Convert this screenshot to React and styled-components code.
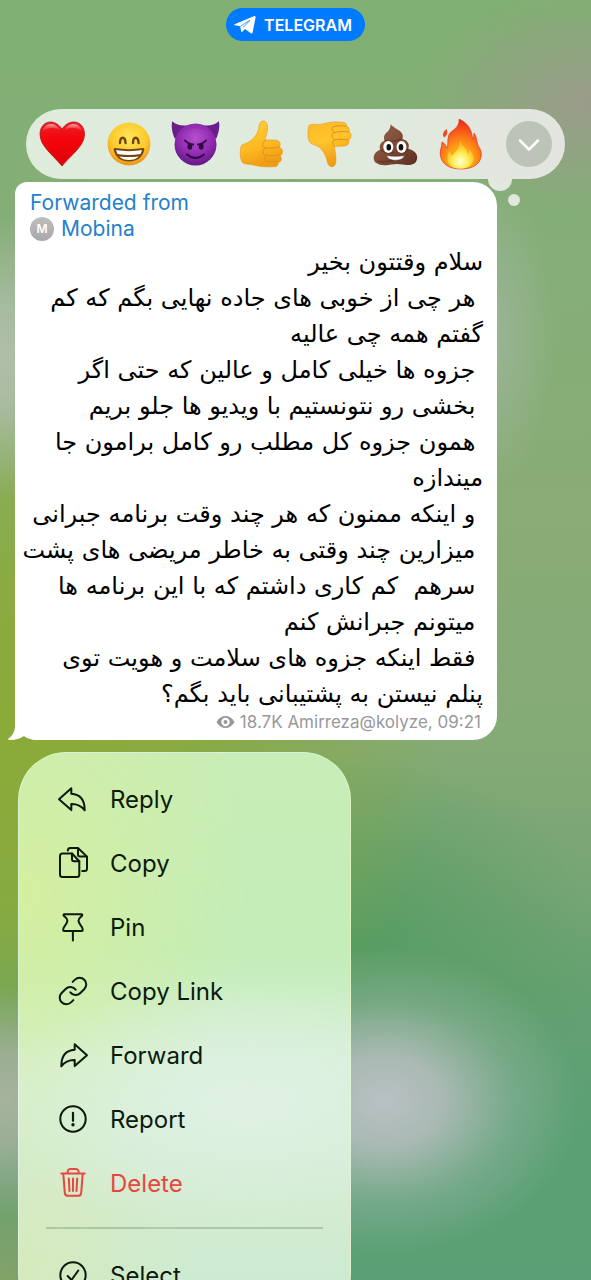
import React from 'react';
import styled, { createGlobalStyle } from 'styled-components';
import { Link as LinkIcon } from 'lucide-react';

const messageText = [
  'سلام وقتتون بخیر',
  ' هر چی از خوبی های جاده نهایی بگم که کم',
  'گفتم همه چی عالیه',
  ' جزوه ها خیلی کامل و عالین که حتی اگر',
  ' بخشی رو نتونستیم با ویدیو ها جلو بریم',
  ' همون جزوه کل مطلب رو کامل برامون جا',
  'میندازه',
  ' و اینکه ممنون که هر چند وقت برنامه جبرانی',
  ' میزارین چند وقتی به خاطر مریضی های پشت',
  ' سرهم  کم کاری داشتم که با این برنامه ها',
  ' میتونم جبرانش کنم',
  ' فقط اینکه جزوه های سلامت و هویت توی',
  'پنلم نیستن به پشتیبانی باید بگم؟',
].join('\n');

const Heart = () => (
  <EmojiSvg viewBox="0 0 48 48">
    <defs>
      <linearGradient id="heart" x1="0" y1="0" x2="0" y2="1">
        <stop offset="0" stopColor="#e8202a" />
        <stop offset="0.4" stopColor="#f5050b" />
        <stop offset="1" stopColor="#dc0209" />
      </linearGradient>
      <linearGradient id="heartShine" x1="0" y1="0" x2="0" y2="1">
        <stop offset="0" stopColor="#ffb4b4" stopOpacity="0.9" />
        <stop offset="1" stopColor="#ff5050" stopOpacity="0" />
      </linearGradient>
    </defs>
    <path
      d="M24 9C20 3.500 16 2 12.500 2 6.500 2 2 7 2 14c0 12 12 20 22 32 10-12 22.500-20 22.500-32 0-7-4.500-12-10.500-12C32 2 28 3.500 24 9z"
      fill="url(#heart)"
      stroke="#b81a1d"
      strokeWidth="0.8"
    />
    <path d="M4 12c1-5 5-8 9-8 4 0 7 2.500 9 6-4-3-14-3-18 2z" fill="url(#heartShine)" />
    <path d="M26.500 10c2-3.500 5-6 9-6s8 3 9 8c-4-5-14-5-18-2z" fill="url(#heartShine)" />
  </EmojiSvg>
);

const Grin = () => (
  <EmojiSvg viewBox="0 0 48 48">
    <defs>
      <radialGradient id="grin" cx="0.5" cy="0.35" r="0.65">
        <stop offset="0" stopColor="#ffe65a" />
        <stop offset="0.65" stopColor="#fdc92b" />
        <stop offset="1" stopColor="#ee9219" />
      </radialGradient>
    </defs>
    <circle cx="24" cy="24" r="21.400" fill="url(#grin)" />
    <g fill="none" stroke="#70420d" strokeWidth="2.400" strokeLinecap="round">
      <path d="M15 23c.3-7 5-7 5.600 0M28 23c.3-7 5-7 5.600 0" />
    </g>
    <path d="M10 28c9 1.500 19 1.500 28 0 1.500 0 1.500 1.500 1 3-2 7-8 10.500-15 10.500S11 38 9 31c-.5-1.500-.5-3 1-3z" fill="#744612" />
    <path d="M11 30c8 1.500 18 1.500 26 0l-1.500 4c-8 1.300-15 1.300-23 0zM14 36.500c7 .8 13 .8 20 0-5 4.800-15 4.800-20 0z" fill="#fff" />
  </EmojiSvg>
);

const Devil = () => (
  <EmojiSvg viewBox="0 0 48 48">
    <defs>
      <radialGradient id="devil" cx="0.5" cy="0.35" r="0.65">
        <stop offset="0" stopColor="#b84fd0" />
        <stop offset="0.6" stopColor="#902bb0" />
        <stop offset="1" stopColor="#641986" />
      </radialGradient>
    </defs>
    <path d="M1.300 1.300C5 5 10 6 16 5.500L4 19C1 13 0 6 1.300 1.300zM47.800 1.300C44 5 39 6 33 5.500L45 19c3-6 4-13 2.800-17.700z" fill="#6a1f88" />
    <circle cx="24.500" cy="24.500" r="21" fill="url(#devil)" />
    <path d="M9 13c5-7 9-9 15.500-9S35 6 40 13c-9-6-22-6-31 0z" fill="#8a2ba8" opacity="0.5" />
    <g fill="none" stroke="#310946" strokeLinecap="round">
      <path d="M14 20.500c2 2.500 4.500 3.500 8 4M35 20.500c-2 2.500-4.500 3.500-8 4" strokeWidth="2" />
      <path d="M16 34.500c5 4.500 12 4.500 17 0" strokeWidth="2" />
    </g>
    <ellipse cx="18.800" cy="26.500" rx="2.400" ry="3.200" fill="#310946" />
    <ellipse cx="30.200" cy="26.500" rx="2.400" ry="3.200" fill="#310946" />
  </EmojiSvg>
);

const ThumbUp = () => (
  <EmojiSvg viewBox="0 0 48 48">
    <defs>
      <linearGradient id="thumbUp" x1="0" y1="0" x2="0.3" y2="1">
        <stop offset="0" stopColor="#ffcf38" />
        <stop offset="0.6" stopColor="#fdbb22" />
        <stop offset="1" stopColor="#f09d15" />
      </linearGradient>
    </defs>
    <path
      d="M4 25c3-1.500 6-2 9-4.500 4-3.500 6.500-7 7.500-11 .6-3.500 1-8 4-8.500 3.500-.5 5.500 3 5 8-.3 4-1.500 7-2.500 11h6c4 0 8 0 9 3 .7 2-.2 3.500-1 4 2.500 1 4 3 3.500 5.500-.3 2-1.500 3-2.500 3.300 1.500 1.500 1.800 3 1 4.700-.7 1.500-2 2-3 2.300.8 3-1.500 4-5 4-7 .3-13 0-18-1.500-4-1.200-8-.5-12-2.300C1.500 40 1.500 28 4 25z"
      fill="url(#thumbUp)"
      stroke="#e8951c"
      strokeWidth="0.6"
    />
    <g fill="none" stroke="#e0901a" strokeWidth="1" strokeLinecap="round">
      <path d="M27 20.500c-3 2-3.500 6-.5 7.300 5 .8 10 .5 15-.8M27 28c-3 2-3 6 .5 7.300 5 .8 9 .5 14.500-.8M28 35.500c-2 2-2 5 .5 6 4 .8 7.500.3 11-.5" />
    </g>
  </EmojiSvg>
);

const ThumbDown = () => (
  <EmojiSvg viewBox="0 0 48 48">
    <defs>
      <linearGradient id="thumbDown" x1="0" y1="0" x2="0.3" y2="1">
        <stop offset="0" stopColor="#fdba27" />
        <stop offset="0.5" stopColor="#ffc42b" />
        <stop offset="1" stopColor="#f09d15" />
      </linearGradient>
    </defs>
    <path
      d="M4.500 5C10 3 13 5.500 18 4c6-2 13-2.500 19-1.800 4 .3 5 2 4.500 4 2 .5 3.500 2.500 2.500 5.500 1.500 1 2.500 3 2 5-.4 1.800-1.500 2.700-2.500 3 .8 2 .5 4-1 5.200-2 1.500-9 1.500-13 1.300 0 4 1.500 8 1.500 13 0 4-1 7.500-4 7.500-4 0-4.500-4-5.500-8-1-3.500-3-7-6-10.500-3-3-7-3-10-5.200C2 20 2.500 8 4.500 5z"
      fill="url(#thumbDown)"
      stroke="#e8951c"
      strokeWidth="0.6"
    />
    <g fill="none" stroke="#e0901a" strokeWidth="1" strokeLinecap="round">
      <path d="M41 6.500c-4-1-8-1-12 0-3 1.500-2.500 5 .5 6M44 12c-5-.8-10-.8-15 .8-3 1.700-2.500 5.500.5 6.700M43.500 20c-5-1-10-1-14 0-3 1.500-2 4.500 0 6" />
    </g>
  </EmojiSvg>
);

const Poo = () => (
  <EmojiSvg viewBox="0 0 48 48">
    <defs>
      <linearGradient id="poo" x1="0" y1="0" x2="1" y2="1">
        <stop offset="0" stopColor="#97644d" />
        <stop offset="0.55" stopColor="#7c4835" />
        <stop offset="1" stopColor="#5a2e21" />
      </linearGradient>
    </defs>
    <path
      d="M18.700 4c1 3 8 5 11 9 1.800 2.500 1 5 .5 6 5 .8 8 5 6 10 5 .5 9.500 4.500 9 9-.5 5-4 7-9 7-4 .2-7-1-11-1-5 0-8 1.500-13 1.200-6-.3-10.500-2.200-10.500-7.200 0-4 3-7.500 6.500-8-1.500-4 .5-8 4.500-9.500-1.500-3-.5-6 2-8 2.500-2 4-5 4-8.500z"
      fill="url(#poo)"
    />
    <path d="M13 20.500c6 1.500 12 .8 17-2M8.500 30c4 3 9 3.500 13 3M36 29c-2 3-5 4-8 4M6 41c5 2 10-.5 15-.5" fill="none" stroke="#4b251a" strokeWidth="1" strokeLinecap="round" opacity="0.7" />
    <ellipse cx="16.300" cy="27" rx="5" ry="6" fill="#fff" />
    <ellipse cx="29.500" cy="27" rx="5" ry="6" fill="#fff" />
    <ellipse cx="16.800" cy="27.200" rx="2.300" ry="3.200" fill="#111" />
    <ellipse cx="29" cy="27.200" rx="2.300" ry="3.200" fill="#111" />
    <path d="M14.500 35.500c6 1 12 1 18 0-1.500 6.500-16.500 6.500-18 0z" fill="#fff" stroke="#4b251a" strokeWidth="0.6" />
  </EmojiSvg>
);

const Fire = () => (
  <EmojiSvg viewBox="0 0 48 48">
    <defs>
      <radialGradient id="fire" cx="0.5" cy="0.85" r="0.85">
        <stop offset="0" stopColor="#ffd52a" />
        <stop offset="0.4" stopColor="#ff9a14" />
        <stop offset="0.75" stopColor="#f9541b" />
        <stop offset="1" stopColor="#e22718" />
      </radialGradient>
      <radialGradient id="fireCore" cx="0.5" cy="0.75" r="0.6">
        <stop offset="0" stopColor="#ffffd2" />
        <stop offset="0.5" stopColor="#ffed55" />
        <stop offset="1" stopColor="#ffb523" />
      </radialGradient>
    </defs>
    <path
      d="M21 -.8c8 3 13 9.800 13.500 20 1-1.500 1.500-3.500 1.500-6 3 4 2.500 8 4 12 1.500 3 3.500 5 3.300 10C42.500 44 35 49 23 49S3 44 2.200 34C2 29 4 27.500 4 22c3 1.500 4 3.500 4.500 6 2.500-3 .5-7 2-12C12 10 22 9 21-.8z"
      fill="url(#fire)"
      stroke="#df321a"
      strokeWidth="0.7"
    />
    <path d="M8.500 9c1.500 3 1 6-2 8.500C4 15.500 4.500 12 8.500 9z" fill="#eb4b25" />
    <path d="M22 20c2 6 7 8 8 14 1-1 1.500-2.500 1.500-4.500 3.500 4 5 8 3.500 12C33 46 29 48.500 22.500 48.500S11 46 9.500 41C8.500 37 10 34 11 31c1.500 1.500 2.500 3 2.500 5 4-4 8.500-8 8.500-16z" fill="url(#fireCore)" />
  </EmojiSvg>
);

const replyPath = 'M14.300 5.300 2 16.200l12.300 10.900v-6c5.700-.2 9.700 1.600 13.400 6.200 0-9.300-4-16-13.400-16.500z';

const ReplyIcon = () => (
  <MenuSvg viewBox="0 0 32 32">
    <path d={replyPath} />
  </MenuSvg>
);

const ForwardIcon = () => (
  <MenuSvg viewBox="0 0 32 32">
    <path d={replyPath} transform="matrix(-1 0 0 1 32 0)" />
  </MenuSvg>
);

const CopyIcon = () => (
  <MenuSvg viewBox="0 0 32 32">
    <path d="M5.500 6.500H15l7.300 7.800v13.200a2.500 2.500 0 0 1-2.500 2.500H5.500A2.500 2.500 0 0 1 3 27.500V9a2.500 2.500 0 0 1 2.500-2.500z" />
    <path d="M15 6.500v5.800a2 2 0 0 0 2 2h5.300" />
    <path d="M10.800 3.500A2.700 2.700 0 0 1 13.500 1H21l9 8.600v11.900a2.500 2.500 0 0 1-2.500 2.500h-2.300M21 1v6.600a2 2 0 0 0 2 2h7" />
  </MenuSvg>
);

const PinIcon = () => (
  <MenuSvg viewBox="0 0 32 32">
    <path d="M7.300 3.300h17.200c.8 0 1 .8.6 1.300-1.300 1.700-3.600 2.500-3.600 5 0 4 3.900 5 4.300 9.200 0 .8-.4 1.200-1.100 1.200H7.200c-.8 0-1.100-.4-1.100-1.200.4-4.200 4.300-5.200 4.300-9.200 0-2.500-2.400-3.300-3.700-5-.4-.5-.2-1.300.6-1.300zM15.900 20v9.500" />
  </MenuSvg>
);

const ReportIcon = () => (
  <MenuSvg viewBox="0 0 32 32">
    <circle cx="16" cy="16" r="12.700" />
    <path d="M16 9.800v8" strokeWidth="2.200" />
    <circle cx="16" cy="21.700" r="0.700" fill="currentColor" />
  </MenuSvg>
);

const TrashIcon = () => (
  <MenuSvg viewBox="0 0 32 32">
    <path d="M4.300 6.500h23.400M10.500 6.200C10.500 3 11.300 2 13.800 2h4.600c2.500 0 3.300 1 3.300 4.200M6.300 6.800l1.500 19c.2 2 1.200 3 3.200 3h10c2 0 3-1 3.200-3l1.500-19M11.800 11.500l.7 12.500M16 11.500V24M20.200 11.500 19.500 24" />
  </MenuSvg>
);

const SelectIcon = () => (
  <MenuSvg viewBox="0 0 32 32">
    <circle cx="16" cy="16" r="12.700" />
    <path d="m10.700 17 3.800 4 6.800-9.500" />
  </MenuSvg>
);

const reactions = [
  { name: 'Heart', Icon: Heart },
  { name: 'Grin', Icon: Grin },
  { name: 'Devil', Icon: Devil },
  { name: 'Thumbs up', Icon: ThumbUp },
  { name: 'Thumbs down', Icon: ThumbDown },
  { name: 'Poo', Icon: Poo },
  { name: 'Fire', Icon: Fire },
];

const menuItems = [
  { label: 'Reply', icon: <ReplyIcon /> },
  { label: 'Copy', icon: <CopyIcon /> },
  { label: 'Pin', icon: <PinIcon /> },
  { label: 'Copy Link', icon: <LinkIcon size={32} strokeWidth={1.5} /> },
  { label: 'Forward', icon: <ForwardIcon /> },
  { label: 'Report', icon: <ReportIcon /> },
  { label: 'Delete', icon: <TrashIcon />, danger: true },
];

const App = () => {
  return (
    <>
      <GlobalStyle />
      <Screen>
        <AppBadge type="button">
          <svg width="22" height="20" viewBox="0 0 22 20" aria-hidden="true">
            <path d="M.6 9.300 20.300 1.100c.9-.3 1.500.2 1.300 1.200l-3 15.300c-.2 1-1 1.300-1.800.7l-5.700-4.300-2.800 2.700c-.6.500-1.100.3-1.200-.4l-.9-5L.7 10.200c-.7-.2-.7-.6-.1-.9z" fill="#fff" />
            <path d="m6.400 11.200 9.600-5.900-6.900 7.200" fill="none" stroke="#007aff" strokeWidth="0.700" />
          </svg>
          TELEGRAM
        </AppBadge>

        <ReactionBar>
          {reactions.map(({ name, Icon }) => (
            <ReactionButton key={name} type="button" aria-label={name}>
              <Icon />
            </ReactionButton>
          ))}
          <ReactionButton type="button" aria-label="More reactions">
            <svg width="48" height="48" viewBox="0 0 48 48">
              <circle cx="24" cy="24" r="23" fill="#bcc4b9" />
              <path d="m15 20.500 9 9 9-9" fill="none" stroke="#fff" strokeWidth="2.500" strokeLinecap="round" strokeLinejoin="round" />
            </svg>
          </ReactionButton>
        </ReactionBar>

        <Bubble>
          <ForwardHeader>
            <div>Forwarded from</div>
            <Sender href="#mobina">
              <Avatar>M</Avatar>
              Mobina
            </Sender>
          </ForwardHeader>
          <MessageText dir="rtl" lang="fa">{messageText}</MessageText>
          <Meta>
            <svg width="19" height="14" viewBox="0 0 19 14" aria-hidden="true">
              <path d="M.5 7C3 2.800 6 1 9.500 1S16 2.800 18.500 7C16 11.200 13 13 9.500 13S3 11.200.5 7z" fill="#98989b" />
              <circle cx="9.500" cy="7" r="4.200" fill="#fff" />
              <circle cx="9.500" cy="7" r="2" fill="#98989b" />
            </svg>
            <span>18.7K Amirreza@kolyze, 09:21</span>
          </Meta>
          <Tail viewBox="0 0 30 24" aria-hidden="true">
            <path d="M7 0v10c0 5-2 9.500-6.500 12.500C0 23 .3 24 1 24c6 .3 11-1 15-4 3 2.500 8 4 14 4V0z" fill="#fff" />
          </Tail>
        </Bubble>

        <Menu>
          {menuItems.map((item) => (
            <MenuItem key={item.label} type="button" $danger={item.danger}>
              {item.icon}
              {item.label}
            </MenuItem>
          ))}
          <Divider />
          <MenuItem type="button">
            <SelectIcon />
            Select
          </MenuItem>
        </Menu>
      </Screen>
    </>
  );
};

const GlobalStyle = createGlobalStyle`
  * {
    box-sizing: border-box;
  }

  body {
    margin: 0;
    font-family: Inter, 'Liberation Sans', sans-serif;
  }

  button {
    border: none;
    padding: 0;
    background: none;
    font-family: inherit;
    cursor: pointer;
  }
`;

const Screen = styled.main`
  height: 100vh;
  overflow: hidden;
  display: flex;
  flex-direction: column;
  align-items: flex-start;
  background:
    radial-gradient(ellipse 33% 12% at 65% 86%, #b9c0c3 0%, rgba(182, 190, 191, 0.85) 30%, rgba(160, 184, 172, 0.4) 65%, rgba(140, 178, 155, 0) 100%),
    radial-gradient(ellipse 22% 9% at 0% 86%, #a7b29e 0%, rgba(167, 178, 158, 0.8) 40%, rgba(167, 178, 158, 0) 100%),
    radial-gradient(ellipse 14% 11% at 0% 28%, #b0bfab 0%, rgba(176, 191, 171, 0.8) 35%, rgba(176, 191, 171, 0) 100%),
    radial-gradient(ellipse 30% 9% at 100% 8%, #9b9b8b 0%, rgba(155, 155, 139, 0) 100%),
    radial-gradient(ellipse 11% 12% at 83% 26%, rgba(158, 182, 155, 0.9) 0%, rgba(158, 182, 155, 0) 100%),
    radial-gradient(ellipse 30% 12% at 0% 100%, rgba(136, 163, 102, 0.9) 0%, rgba(136, 163, 102, 0) 100%),
    radial-gradient(ellipse 75% 32% at 0% 58%, #8aab38 0%, rgba(138, 171, 56, 0.85) 40%, rgba(138, 171, 56, 0) 100%),
    radial-gradient(ellipse 45% 15% at 58% 74%, #559c62 0%, rgba(85, 156, 98, 0) 100%),
    linear-gradient(180deg, #80b072 0%, #85ae78 20%, #8aac76 40%, #84aa76 58%, #77a575 70%, #64a172 78%, #5ba074 88%, #5a9f75 100%);
`;

const AppBadge = styled.button`
  flex-shrink: 0;
  align-self: center;
  height: 33px;
  margin-top: 8px;
  padding: 0 13px 0 8px;
  border-radius: 17px;
  background: #007aff;
  color: #fff;
  display: flex;
  align-items: center;
  gap: 8px;
  font-size: 16px;
  font-weight: 600;
`;

const ReactionBar = styled.div`
  flex-shrink: 0;
  align-self: stretch;
  position: relative;
  z-index: 1;
  height: 70px;
  margin: 68px 26px 0;
  padding: 0 12px;
  border-radius: 35px;
  background: linear-gradient(90deg, #dfecdc, #e0ebde 60%, #e3e4df);
  display: flex;
  align-items: center;
  justify-content: space-between;

  /* thought bubble dots */
  &::before,
  &::after {
    content: '';
    position: absolute;
    border-radius: 50%;
    background: #e2e8de;
  }

  &::before {
    width: 24px;
    height: 12px;
    right: 53px;
    top: 70px;
    border-radius: 0 0 12px 12px;
  }

  &::after {
    width: 12px;
    height: 12px;
    right: 45px;
    top: 85px;
  }
`;

const ReactionButton = styled.button`
  width: 48px;
  height: 48px;
`;

const EmojiSvg = styled.svg`
  display: block;
  width: 48px;
  height: 48px;
  overflow: visible;
`;

const Bubble = styled.article`
  flex-shrink: 0;
  align-self: stretch;
  position: relative;
  margin: 3px 94px 0 15px;
  padding: 8px 14px;
  border-radius: 12px 24px 24px 22px;
  background: #fff;
`;

const ForwardHeader = styled.header`
  padding-left: 1px;
  margin-bottom: 2px;
  color: #2481cc;
  font-size: 21px;
  line-height: 26px;
`;

const Sender = styled.a`
  display: flex;
  align-items: center;
  gap: 7px;
  color: inherit;
  text-decoration: none;
`;

const Avatar = styled.span`
  width: 24px;
  height: 24px;
  border-radius: 50%;
  background: linear-gradient(#bebebe, #a8a8a8);
  color: #fff;
  display: flex;
  align-items: center;
  justify-content: center;
  font-size: 12px;
  font-weight: 600;
`;

const MessageText = styled.p`
  margin: 0;
  white-space: pre;
  font-family: 'DejaVu Sans', sans-serif;
  font-size: 24px;
  line-height: 36px;
  color: #000;
`;

const Meta = styled.footer`
  display: flex;
  align-items: center;
  justify-content: flex-end;
  gap: 5px;
  height: 20px;
  padding-right: 2px;
  color: #98989b;
  font-size: 17px;
`;

const Tail = styled.svg`
  position: absolute;
  left: -7px;
  bottom: 0;
  width: 30px;
  height: 24px;
`;

const Menu = styled.nav`
  flex-shrink: 0;
  width: 333px;
  margin: 12px 18px 0;
  padding: 14px 0;
  border: 1px solid rgba(255, 255, 255, 0.3);
  border-radius: 48px;
  display: flex;
  flex-direction: column;
  background:
    radial-gradient(ellipse 80% 22% at 70% 62%, #dff1e4 0%, rgba(223, 241, 228, 0) 100%),
    radial-gradient(ellipse 70% 50% at 0% 25%, #d5efa0 0%, rgba(213, 239, 160, 0) 100%),
    radial-gradient(ellipse 50% 30% at 0% 90%, #d6eabc 0%, rgba(214, 234, 188, 0) 100%),
    linear-gradient(180deg, #c9edb6 0%, #c3edb9 35%, #d8efd8 55%, #d3ebd0 80%, #caebd2 100%);
`;

const MenuItem = styled.button`
  height: 64px;
  padding: 0 38px;
  display: flex;
  align-items: center;
  gap: 21px;
  color: ${props => props.$danger ? '#e8473f' : '#0b1a0b'};
  font-size: 24px;
  text-align: left;
`;

const MenuSvg = styled.svg`
  width: 32px;
  height: 32px;
  fill: none;
  stroke: currentColor;
  stroke-width: 2;
  stroke-linecap: round;
  stroke-linejoin: round;
`;

const Divider = styled.hr`
  width: calc(100% - 54px);
  height: 2px;
  margin: 12px auto 14px;
  border: none;
  background: rgba(90, 120, 90, 0.3);
`;

export default App;
